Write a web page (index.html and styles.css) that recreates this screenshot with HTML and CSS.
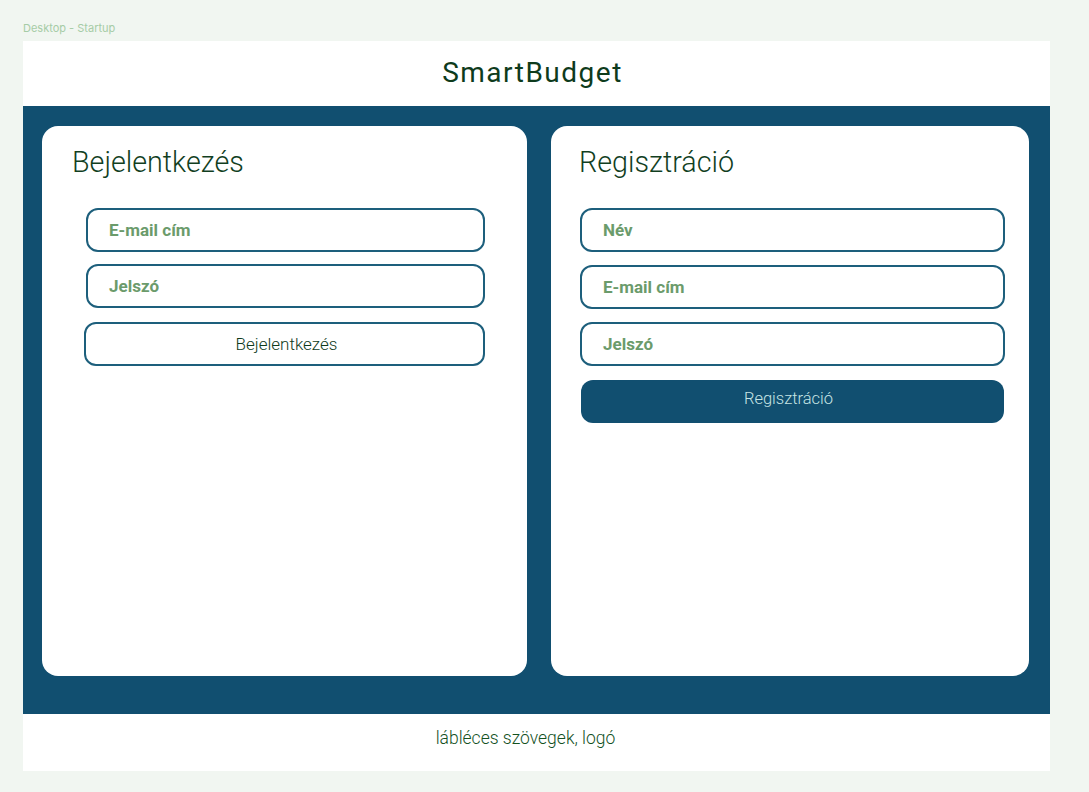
FILE: index.html
```html
<!DOCTYPE html>
<html lang="hu">
<head>
<meta charset="utf-8">
<title>SmartBudget</title>
<link rel="stylesheet" href="styles.css">
</head>
<body>
<div class="canvas-label">Desktop - Startup</div>
<div class="frame">
  <header class="topbar"><h1 class="brand">SmartBudget</h1></header>
  <main class="stage">
    <section class="card card-login">
      <h2 class="card-title">Bejelentkezés</h2>
      <div class="form form-login">
        <div class="field">E-mail cím</div>
        <div class="field">Jelszó</div>
        <button class="btn btn-outline">Bejelentkezés</button>
      </div>
    </section>
    <section class="card card-register">
      <h2 class="card-title">Regisztráció</h2>
      <div class="form form-register">
        <div class="field">Név</div>
        <div class="field">E-mail cím</div>
        <div class="field">Jelszó</div>
        <button class="btn btn-filled">Regisztráció</button>
      </div>
    </section>
  </main>
  <footer class="footer">lábléces szövegek, logó</footer>
</div>
</body>
</html>
```
FILE: styles.css
```css
* { box-sizing: border-box; }
body {
  margin: 0;
  background: #f1f6f1;
  font-family: Roboto, "Liberation Sans", sans-serif;
}
.canvas-label {
  font-family: Inter, Roboto, sans-serif;
  font-size: 11px;
  color: #a6cca6;
  padding: 21px 0 0 23px;
  height: 41px;
}
.frame {
  margin-left: 23px;
  width: 1027px;
  background: #fff;
}
.topbar {
  height: 65px;
  display: flex;
  align-items: center;
  justify-content: center;
}
.brand {
  margin: 0;
  font-weight: 400;
  font-size: 28px;
  letter-spacing: 1.5px;
  color: #0e3b1c;
  padding: 0 8px 2px 0;
}
.stage {
  background: #114f70;
  display: grid;
  grid-template-columns: 485px 478px;
  column-gap: 24px;
  padding: 20px 21px 38px 19px;
}
.card {
  background: #fff;
  border-radius: 16px;
  height: 550px;
}
.card-title {
  margin: 0;
  font-weight: 300;
  font-size: 28.7px;
  color: #123f1f;
  line-height: 36px;
}
.card-login .card-title { padding: 18px 0 0 30px; }
.card-register .card-title { padding: 18px 0 0 28px; }
.form {
  display: flex;
  flex-direction: column;
}
.form-login { margin: 28px 42px 0 42px; gap: 12px; }
.form-login .field { margin-left: 2px; }
.form-login .btn { margin-top: 2px; }
.form-register { margin: 28px 24px 0 28px; gap: 13px; }
.form-register .field { margin-left: 1px; }
.field {
  height: 44px;
  border: 2px solid #1d5f7c;
  border-radius: 12px;
  display: flex;
  align-items: center;
  padding-left: 21px;
  font-weight: 700;
  font-size: 17px;
  color: #6b9b6b;
}
.btn {
  font-family: Roboto, "Liberation Sans", sans-serif;
  font-size: 16.5px;
  font-weight: 300;
  border-radius: 12px;
  height: 44px;
  cursor: pointer;
}
.btn-outline {
  background: #fff;
  border: 2px solid #1d5f7c;
  color: #0f3a1b;
  font-size: 17px;
  padding-left: 10px;
}
.btn-filled {
  background: #114f70;
  border: none;
  color: #c6e4e4;
  height: 43px;
  margin: 1px 1px 0 2px;
  padding: 0 8px 6px 0;
}
.footer {
  height: 57px;
  display: flex;
  align-items: center;
  justify-content: center;
  font-size: 17.5px;
  font-weight: 300;
  color: #14521f;
  padding: 0 22px 10px 0;
}
```
